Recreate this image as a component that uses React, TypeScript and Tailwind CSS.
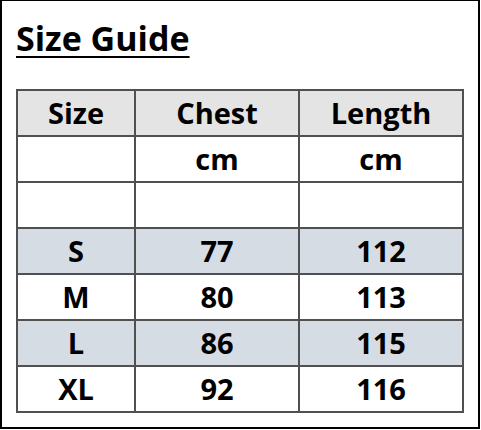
const rows = [
  { cells: ["Size", "Chest", "Length"], bg: "bg-[#e4e4e4]" },
  { cells: ["", "cm", "cm"], bg: "bg-white" },
  { cells: ["", "", ""], bg: "bg-white" },
  { cells: ["S", "77", "112"], bg: "bg-[#d6dce4]" },
  { cells: ["M", "80", "113"], bg: "bg-white" },
  { cells: ["L", "86", "115"], bg: "bg-[#d6dce4]" },
  { cells: ["XL", "92", "116"], bg: "bg-white" },
]

const App = () => {
  return (
    <div className="w-[481px] h-[430px] bg-white" style={{ fontFamily: "'Open Sans', sans-serif" }}>
      <div className="w-[480px] h-[429px] border-l-2 border-r-2 border-b-2 border-t border-black pl-[14px] pt-[14px]">
        <h1 className="text-[34px] leading-[46px] font-bold underline decoration-2 underline-offset-[5px] text-black">
          Size Guide
        </h1>
        <div className="mt-[28px] w-[448px] grid grid-cols-[116px_162px_162px] gap-[2px] p-[2px] bg-[#505050]">
          {rows.map((row, i) =>
            row.cells.map((c, j) => (
              <div
                key={i + "-" + j}
                className={`${row.bg} h-[44px] flex items-center justify-center text-[29px] font-bold text-black`}
              >
                {c}
              </div>
            ))
          )}
        </div>
      </div>
    </div>
  )
}

export default App
